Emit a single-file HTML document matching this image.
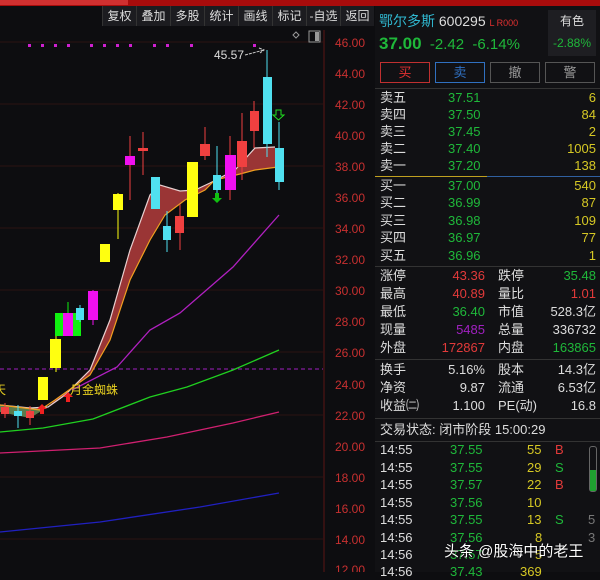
<!DOCTYPE html>
<html><head><meta charset="utf-8"><style>
*{margin:0;padding:0;box-sizing:border-box}
body{width:600px;height:572px;background:#0d0d10;overflow:hidden;position:relative;font-family:"Liberation Sans","Noto Sans CJK SC",sans-serif;}
.a{position:absolute;white-space:nowrap}
.tb{position:absolute;top:6px;height:20px;background:#1c1c20;color:#ddd;font-size:12px;line-height:20px;text-align:center;border-left:1px solid #333}
.rp{position:absolute;left:375px;top:6px;width:225px;height:566px;background:#111114}
.r{position:absolute;left:380px;font-size:13px;line-height:16px;color:#ddd;width:216px;height:16px}
.r span{position:absolute}
.g{color:#1fb83a}.y{color:#d6c824}.rd{color:#e23a3a}.w{color:#ddd}
</style></head><body>
<div class="a" style="left:0;top:0;width:600px;height:6px;background:#a80c0c"></div>
<div class="a" style="left:0;top:0;width:128px;height:5px;background:#d03030"></div>
<div class="a" style="left:0;top:6px;width:375px;height:20px;background:#0d0d10"></div>
<div class="tb" style="left:102px;width:34px">复权</div>
<div class="tb" style="left:136px;width:34px">叠加</div>
<div class="tb" style="left:170px;width:34px">多股</div>
<div class="tb" style="left:204px;width:34px">统计</div>
<div class="tb" style="left:238px;width:34px">画线</div>
<div class="tb" style="left:272px;width:34px">标记</div>
<div class="tb" style="left:306px;width:34px">-自选</div>
<div class="tb" style="left:340px;width:34px">返回</div>

<svg class="a" style="left:0;top:26px" width="375" height="546" viewBox="0 26 375 546">
<g stroke="#2a1212" stroke-width="1">
<line x1="0" y1="42" x2="323" y2="42"/><line x1="0" y1="104" x2="323" y2="104"/><line x1="0" y1="166" x2="323" y2="166"/><line x1="0" y1="228" x2="323" y2="228"/><line x1="0" y1="290" x2="323" y2="290"/><line x1="0" y1="352" x2="323" y2="352"/><line x1="0" y1="415" x2="323" y2="415"/><line x1="0" y1="477" x2="323" y2="477"/><line x1="0" y1="539" x2="323" y2="539"/>
</g>
<line x1="324" y1="30" x2="324" y2="572" stroke="#5a1515" stroke-width="1"/>
<g fill="#c83030" font-size="12" font-family="Liberation Sans">
<text x="335" y="47">46.00</text><text x="335" y="78">44.00</text><text x="335" y="109">42.00</text><text x="335" y="140">40.00</text><text x="335" y="171">38.00</text><text x="335" y="202">36.00</text><text x="335" y="233">34.00</text><text x="335" y="264">32.00</text><text x="335" y="295">30.00</text><text x="335" y="326">28.00</text><text x="335" y="357">26.00</text><text x="335" y="389">24.00</text><text x="335" y="420">22.00</text><text x="335" y="451">20.00</text><text x="335" y="482">18.00</text><text x="335" y="513">16.00</text><text x="335" y="544">14.00</text><text x="335" y="574">12.00</text>
</g>
<path d="M293 35 l3 -3 l3 3 l-3 3z" fill="none" stroke="#999"/>
<rect x="309" y="31" width="11" height="11" fill="none" stroke="#999"/><rect x="315" y="32" width="4" height="9" fill="#999"/>
<g fill="#d020d0"><rect x="28" y="44" width="3" height="3"/><rect x="41" y="44" width="3" height="3"/><rect x="54" y="44" width="3" height="3"/><rect x="67" y="44" width="3" height="3"/><rect x="90" y="44" width="3" height="3"/><rect x="103" y="44" width="3" height="3"/><rect x="116" y="44" width="3" height="3"/><rect x="129" y="44" width="3" height="3"/><rect x="153" y="44" width="3" height="3"/><rect x="166" y="44" width="3" height="3"/><rect x="190" y="44" width="3" height="3"/><rect x="253" y="44" width="3" height="3"/></g>
<line x1="0" y1="369" x2="323" y2="369" stroke="#a020c0" stroke-dasharray="4,3"/>
<polyline fill="none" stroke="#2020c0" stroke-width="1.3" points="0,532 100,522 200,507 279,493"/>
<polyline fill="none" stroke="#d02070" stroke-width="1.3" points="0,453 100,448 167,437 233,423 279,412"/>
<polyline fill="none" stroke="#20d020" stroke-width="1.3" points="0,432 43,428 93,419 150,397 187,387 233,370 279,350"/>
<polyline fill="none" stroke="#b020c0" stroke-width="1.3" points="72,390 117,367 150,330 180,313 233,267 279,215"/>
<path d="M0,405 L30,408 L48,407 L30,418 L0,412Z" fill="#5a7a4a"/>
<path d="M48,407 L65,395 L90,370 L110,320 L130,250 L150,195 L160,185 L180,191 L195,190 L210,183 L235,170 L255,148 L275,147 L278,167 L255,170 L240,174 L215,180 L205,190 L185,200 L165,215 L150,240 L130,280 L110,340 L90,375 L55,400Z" fill="#9a3535"/>
<polyline fill="none" stroke="#e8d0d0" stroke-width="1.2" points="0,405 30,408 48,407 65,395 90,370 110,320 130,250 150,195 160,185 180,191 195,190 210,183 235,170 255,148 275,147"/>
<polyline fill="none" stroke="#f0a020" stroke-width="1.2" points="0,405 40,410 55,400 90,375 110,340 130,280 150,240 165,215 185,200 205,190 215,180 240,174 255,170 278,167"/>
<g stroke-width="1">
<line x1="5" y1="403" x2="5" y2="418" stroke="#f04040"/><rect x="1" y="407" width="8" height="7" fill="#f04040"/>
<line x1="18" y1="405" x2="18" y2="428" stroke="#50e0f0"/><rect x="14" y="411" width="8" height="5" fill="#50e0f0"/>
<line x1="30" y1="406" x2="30" y2="425" stroke="#f04040"/><rect x="26" y="411" width="8" height="7" fill="#f04040"/>
<rect x="38" y="377" width="10" height="23" fill="#ffff10"/>
<line x1="56" y1="335" x2="56" y2="372" stroke="#ffff10"/><rect x="50" y="339" width="11" height="29" fill="#ffff10"/>
<rect x="55" y="313" width="8" height="23" fill="#10f010"/><line x1="68" y1="302" x2="68" y2="313" stroke="#10f010"/><rect x="63" y="313" width="10" height="23" fill="#f010f0"/><rect x="73" y="313" width="8" height="23" fill="#10f010"/>
<line x1="80" y1="305" x2="80" y2="322" stroke="#50e0f0"/><rect x="76" y="308" width="8" height="12" fill="#50e0f0"/>
<line x1="93" y1="290" x2="93" y2="325" stroke="#f010f0"/><rect x="88" y="291" width="10" height="29" fill="#f010f0"/>
<rect x="100" y="244" width="10" height="18" fill="#ffff10"/>
<line x1="118" y1="193" x2="118" y2="239" stroke="#ffff10"/><rect x="113" y="194" width="10" height="16" fill="#ffff10"/>
<line x1="130" y1="136" x2="130" y2="200" stroke="#f04040"/><rect x="125" y="156" width="10" height="9" fill="#f010f0"/>
<line x1="143" y1="132" x2="143" y2="175" stroke="#f04040"/><rect x="138" y="148" width="10" height="3" fill="#f04040"/>
<rect x="151" y="177" width="9" height="32" fill="#50e0f0"/>
<line x1="167" y1="211" x2="167" y2="252" stroke="#50e0f0"/><rect x="163" y="226" width="8" height="14" fill="#50e0f0"/>
<line x1="180" y1="204" x2="180" y2="250" stroke="#f04040"/><rect x="175" y="216" width="9" height="17" fill="#f04040"/>
<rect x="187" y="162" width="11" height="55" fill="#ffff10"/>
<line x1="205" y1="127" x2="205" y2="160" stroke="#f04040"/><rect x="200" y="144" width="10" height="12" fill="#f04040"/>
<line x1="217" y1="146" x2="217" y2="195" stroke="#50e0f0"/><rect x="213" y="175" width="8" height="15" fill="#50e0f0"/>
<line x1="230" y1="136" x2="230" y2="200" stroke="#f04040"/><rect x="225" y="155" width="11" height="35" fill="#f010f0"/>
<line x1="242" y1="113" x2="242" y2="180" stroke="#f04040"/><rect x="237" y="141" width="10" height="26" fill="#f04040"/>
<line x1="254" y1="101" x2="254" y2="148" stroke="#f04040"/><rect x="250" y="111" width="9" height="20" fill="#f04040"/>
<line x1="267" y1="50" x2="267" y2="157" stroke="#50e0f0"/><rect x="263" y="77" width="9" height="67" fill="#50e0f0"/>
<line x1="279" y1="122" x2="279" y2="190" stroke="#50e0f0"/><rect x="275" y="148" width="9" height="34" fill="#50e0f0"/>
</g>
<text x="214" y="59" fill="#ddd" font-size="12" font-family="Liberation Sans">45.57</text>
<path d="M245 55 L264 50 M259 48 L264 50 L260 53" stroke="#ccc" fill="none" stroke-dasharray="3,1"/>
<path d="M276 110 h5 v5 h3 l-5.5 5 l-5.5 -5 h3z" fill="none" stroke="#20e020"/>
<path d="M215 193 h4 v5 h3 l-5 5 l-5 -5 h3z" fill="#10c010"/>
<path d="M40 414 h4 v-5 h3 l-5 -5 l-5 5 h3z" fill="#f02020"/>
<path d="M66 402 h4 v-5 h3 l-5 -5 l-5 5 h3z" fill="#f02020"/>
<text x="70" y="394" fill="#e8d020" font-size="12" font-family="Liberation Sans,Noto Sans CJK SC,sans-serif">月金蜘蛛</text>
<text x="-6" y="394" fill="#e8d020" font-size="12" font-family="Noto Sans CJK SC,sans-serif">天</text>
</svg>

<div class="rp"></div>
<div class="a" style="left:379px;top:11px;font-size:14px;color:#30b8d0">鄂尔多斯 <span style="color:#ddd">600295</span> <span style="color:#e03030;font-size:9px">L R000</span></div>
<div class="a" style="left:548px;top:10px;width:48px;height:46px;background:#1e1e22;color:#ddd;font-size:12px;text-align:center;line-height:22px">有色<br><span style="color:#1fb83a">-2.88%</span></div>
<div class="a" style="left:379px;top:34px;font-size:15px;color:#1fb83a"><b style="font-size:17px">37.00</b>&nbsp; -2.42 &nbsp;-6.14%</div>
<div class="a" style="left:380px;top:62px;width:50px;height:21px;border:1px solid #c03030;color:#e03030;font-size:13px;text-align:center;line-height:19px">买</div>
<div class="a" style="left:435px;top:62px;width:50px;height:21px;border:1px solid #3070c0;color:#3070c0;font-size:13px;text-align:center;line-height:19px">卖</div>
<div class="a" style="left:490px;top:62px;width:50px;height:21px;border:1px solid #555;color:#999;font-size:13px;text-align:center;line-height:19px">撤</div>
<div class="a" style="left:545px;top:62px;width:50px;height:21px;border:1px solid #555;color:#999;font-size:13px;text-align:center;line-height:19px">警</div>
<div class="a" style="left:375px;top:88px;width:225px;height:1px;background:#333"></div>
<div class="r" style="top:90px"><span>卖五</span><span class="g" style="left:68px">37.51</span><span class="y" style="right:0">6</span></div>
<div class="r" style="top:107px"><span>卖四</span><span class="g" style="left:68px">37.50</span><span class="y" style="right:0">84</span></div>
<div class="r" style="top:124px"><span>卖三</span><span class="g" style="left:68px">37.45</span><span class="y" style="right:0">2</span></div>
<div class="r" style="top:141px"><span>卖二</span><span class="g" style="left:68px">37.40</span><span class="y" style="right:0">1005</span></div>
<div class="r" style="top:158px"><span>卖一</span><span class="g" style="left:68px">37.20</span><span class="y" style="right:0">138</span></div>
<div class="a" style="left:375px;top:176px;width:112px;height:1px;background:#c0a020"></div><div class="a" style="left:487px;top:176px;width:113px;height:1px;background:#3060a0"></div>
<div class="r" style="top:178px"><span>买一</span><span class="g" style="left:68px">37.00</span><span class="y" style="right:0">540</span></div>
<div class="r" style="top:195px"><span>买二</span><span class="g" style="left:68px">36.99</span><span class="y" style="right:0">87</span></div>
<div class="r" style="top:213px"><span>买三</span><span class="g" style="left:68px">36.98</span><span class="y" style="right:0">109</span></div>
<div class="r" style="top:230px"><span>买四</span><span class="g" style="left:68px">36.97</span><span class="y" style="right:0">77</span></div>
<div class="r" style="top:248px"><span>买五</span><span class="g" style="left:68px">36.96</span><span class="y" style="right:0">1</span></div>
<div class="a" style="left:375px;top:266px;width:225px;height:1px;background:#333"></div>
<div class="r" style="top:268px"><span>涨停</span><span class="rd" style="right:111px">43.36</span><span style="left:118px">跌停</span><span class="g" style="right:0">35.48</span></div>
<div class="r" style="top:286px"><span>最高</span><span class="rd" style="right:111px">40.89</span><span style="left:118px">量比</span><span class="rd" style="right:0">1.01</span></div>
<div class="r" style="top:304px"><span>最低</span><span class="g" style="right:111px">36.40</span><span style="left:118px">市值</span><span style="right:0">528.3亿</span></div>
<div class="r" style="top:322px"><span>现量</span><span style="right:111px;color:#a020c0">5485</span><span style="left:118px">总量</span><span style="right:0">336732</span></div>
<div class="r" style="top:340px"><span>外盘</span><span class="rd" style="right:111px">172867</span><span style="left:118px">内盘</span><span class="g" style="right:0">163865</span></div>
<div class="a" style="left:375px;top:359px;width:225px;height:1px;background:#333"></div>
<div class="r" style="top:362px"><span>换手</span><span style="right:111px">5.16%</span><span style="left:118px">股本</span><span style="right:0">14.3亿</span></div>
<div class="r" style="top:380px"><span>净资</span><span style="right:111px">9.87</span><span style="left:118px">流通</span><span style="right:0">6.53亿</span></div>
<div class="r" style="top:398px"><span>收益㈡</span><span style="right:111px">1.100</span><span style="left:118px">PE(动)</span><span style="right:0">16.8</span></div>
<div class="a" style="left:375px;top:418px;width:225px;height:1px;background:#333"></div>
<div class="r" style="top:422px"><span>交易状态: 闭市阶段 15:00:29</span></div>
<div class="a" style="left:375px;top:441px;width:225px;height:1px;background:#333"></div>
<div class="r" style="top:442px"><span>14:55</span><span class="g" style="left:70px">37.55</span><span class="y" style="left:147px">55</span><span class="rd" style="left:175px">B</span></div>
<div class="r" style="top:460px"><span>14:55</span><span class="g" style="left:70px">37.55</span><span class="y" style="left:147px">29</span><span class="g" style="left:175px">S</span></div>
<div class="r" style="top:477px"><span>14:55</span><span class="g" style="left:70px">37.57</span><span class="y" style="left:147px">22</span><span class="rd" style="left:175px">B</span></div>
<div class="r" style="top:495px"><span>14:55</span><span class="g" style="left:70px">37.56</span><span class="y" style="left:147px">10</span></div>
<div class="r" style="top:512px"><span>14:55</span><span class="g" style="left:70px">37.55</span><span class="y" style="left:147px">13</span><span class="g" style="left:175px">S</span><span style="left:208px;color:#777">5</span></div>
<div class="r" style="top:530px"><span>14:56</span><span class="g" style="left:70px">37.56</span><span class="y" style="left:155px">8</span><span style="left:208px;color:#777">3</span></div>
<div class="r" style="top:547px"><span>14:56</span><span class="g" style="left:70px">37.57</span><span class="y" style="left:155px">5</span></div>
<div class="r" style="top:564px"><span>14:56</span><span class="g" style="left:70px">37.43</span><span class="y" style="left:140px">369</span></div>
<div class="a" style="left:589px;top:446px;width:8px;height:46px;border:1px solid #666;border-radius:3px"></div>
<div class="a" style="left:590px;top:470px;width:6px;height:21px;background:#1fa030"></div>
<div class="a" style="left:444px;top:540px;font-size:15px;color:#fff;text-shadow:0 0 2px #000">头条 @股海中的老王</div>
</body></html>
